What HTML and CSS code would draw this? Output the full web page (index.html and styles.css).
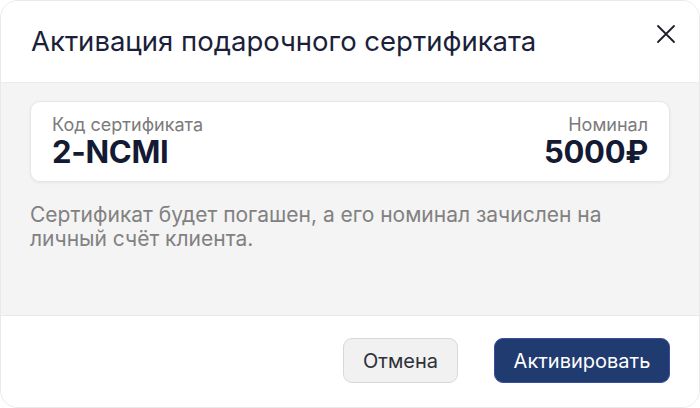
FILE: index.html
```html
<!DOCTYPE html>
<html lang="ru">
<head>
    <meta charset="UTF-8">
    <title>Активация подарочного сертификата</title>
    <link rel="stylesheet" href="styles.css">
</head>
<body>
<div class="modal">
    <div class="modal-head">
        <h2 class="modal-title">Активация подарочного сертификата</h2>
        <a href="javascript:;" class="close" aria-label="Закрыть">
            <svg width="20" height="20" viewBox="0 0 20 20" fill="none" stroke="#1c1f2a" stroke-width="1.8" stroke-linecap="round">
                <path d="M2 2L18 18M18 2L2 18"/>
            </svg>
        </a>
    </div>
    <div class="modal-body">
        <div class="cert">
            <div class="cert-col">
                <span class="cert-label">Код сертификата</span>
                <span class="cert-value">2-NCMI</span>
            </div>
            <div class="cert-col cert-col-right">
                <span class="cert-label">Номинал</span>
                <span class="cert-value">5000₽</span>
            </div>
        </div>
        <p class="note">Сертификат будет погашен, а его номинал зачислен на личный счёт клиента.</p>
    </div>
    <div class="modal-foot">
        <button class="btn btn-cancel">Отмена</button>
        <button class="btn btn-primary">Активировать</button>
    </div>
</div>
</body>
</html>
```

FILE: styles.css
```css
@charset "UTF-8";
/*reset*/
*{box-sizing:border-box}
body,h2,p,button{margin:0;padding:0}
body{font:16px/1.5 Inter, "Noto Sans", sans-serif;color:#1b1f3a;background:#fff;}
a{text-decoration:none}
button{font-family:inherit;cursor:pointer;outline:none;}

.modal{
    height:408px;
    border:1px solid #e9e9e9;
    border-radius:18px;
    overflow:hidden;
    display:flex;
    flex-direction:column;
}

/*шапка*/
.modal-head{
    height:82px;
    flex:none;
    display:flex;
    align-items:flex-start;
    justify-content:space-between;
    padding:23px 23px 0 30px;
    background:#fff;
    border-bottom:1px solid #ececec;
}
.modal-title{
    font-size:27.5px;
    line-height:34px;
    font-weight:400;
    color:#1b1f3a;
}
.close{
    display:flex;
    width:20px;
    height:20px;
}

/*тело*/
.modal-body{
    flex:1;
    background:#f4f4f4;
    padding:18px 29px 0;
}
.cert{
    height:81px;
    display:flex;
    justify-content:space-between;
    align-items:center;
    padding:0 21px 2px;
    background:#fff;
    border:1px solid #e6e6e6;
    border-radius:10px;
    box-shadow:0 1px 3px rgba(0,0,0,.06);
}
.cert-col{
    display:flex;
    flex-direction:column;
}
.cert-col-right{
    align-items:flex-end;
}
.cert-label{
    font-size:18px;
    line-height:22px;
    color:#7b7b7b;
}
.cert-value{
    font-size:31px;
    line-height:32px;
    font-weight:700;
    color:#141a33;
    letter-spacing:-0.3px;
}
.note{
    margin-top:21px;
    width:590px;
    font-size:21px;
    line-height:24px;
    color:#818181;
}

/*кнопки*/
.modal-foot{
    height:92px;
    flex:none;
    display:flex;
    justify-content:flex-end;
    align-items:center;
    gap:36px;
    padding:0 29px 2px;
    border-top:1px solid #e8e8e8;
    background:#fff;
}
.btn{
    height:45px;
    border-radius:9px;
    font-size:20px;
}
.btn-cancel{
    width:115px;
    background:#f1f1f1;
    border:1px solid #d8d8d8;
    color:#2e3038;
}
.btn-primary{
    width:176px;
    background:#1f3b70;
    border:1px solid #3a4ea0;
    color:#fff;
}
```
